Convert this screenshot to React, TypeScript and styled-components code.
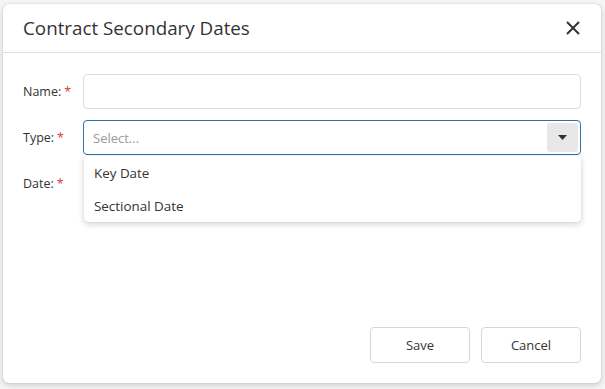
import React from "react";
import styled, { createGlobalStyle } from "styled-components";

const Global = createGlobalStyle`
  html, body { margin: 0; padding: 0; }
  body {
    background: #f6f6f6;
    font-family: "Open Sans", "Noto Sans", sans-serif;
    color: #333;
    width: 605px;
    height: 389px;
    overflow: hidden;
  }
`;

const Page = styled.div`
  padding: 4px 4px 0 3px;
`;

const Dialog = styled.div`
  width: 598px;
  height: 379px;
  background: #fff;
  border-radius: 6px;
  box-shadow: 0 2px 6px rgba(0, 0, 0, 0.18), 0 0 1px rgba(0, 0, 0, 0.25);
  display: flex;
  flex-direction: column;
  box-sizing: border-box;
`;

const Header = styled.div`
  height: 49px;
  box-sizing: border-box;
  border-bottom: 1px solid #dedede;
  display: flex;
  align-items: center;
  justify-content: space-between;
  padding: 0 20px 0 20px;
`;

const Title = styled.h1`
  margin: 0;
  font-size: 18.8px;
  font-weight: 400;
  color: #333;
`;

const Close = styled.button`
  border: 0;
  background: transparent;
  padding: 0;
  width: 16px;
  height: 16px;
  display: flex;
  align-items: center;
  justify-content: center;
  cursor: pointer;
`;

const Body = styled.div`
  flex: 1;
  padding: 21px 20px 0 20px;
  display: flex;
  flex-direction: column;
  gap: 11px;
`;

const Row = styled.div`
  display: flex;
  align-items: center;
  height: 35px;
  position: relative;
`;

const Label = styled.label`
  width: 60px;
  flex: none;
  font-size: 12.5px;
  color: #333;
`;

const Star = styled.span`
  color: #d9383a;
  margin-left: 3px;
`;

const Input = styled.input`
  flex: 1;
  height: 35px;
  box-sizing: border-box;
  border: 1px solid #dcdcdc;
  border-radius: 4px;
  outline: none;
  padding: 0 10px;
  font-family: inherit;
  font-size: 13px;
`;

const Select = styled.div`
  flex: 1;
  height: 35px;
  box-sizing: border-box;
  border: 1px solid #2f6fae;
  border-radius: 4px;
  display: flex;
  align-items: center;
  padding: 0 2px 0 9px;
`;

const Placeholder = styled.span`
  flex: 1;
  font-size: 13px;
  color: #999;
`;

const Caret = styled.div`
  width: 31px;
  height: 29px;
  background: #e8e8e8;
  border-radius: 3px;
  display: flex;
  align-items: center;
  justify-content: center;
`;

const Menu = styled.ul`
  position: absolute;
  left: 61px;
  right: 0;
  top: 36px;
  margin: 0;
  padding: 0;
  list-style: none;
  background: #fff;
  border-radius: 0 0 4px 4px;
  box-shadow: 0 2px 6px rgba(0, 0, 0, 0.18), 0 0 1px rgba(0, 0, 0, 0.2);
  z-index: 2;
  height: 66px;
  display: flex;
  flex-direction: column;
`;

const Item = styled.li`
  padding: 0 10px;
  font-size: 13.4px;
  color: #333;
  height: 33px;
  line-height: 34px;
`;

const Footer = styled.div`
  display: flex;
  justify-content: flex-end;
  gap: 11px;
  padding: 0 20px 20px 0;
`;

const Button = styled.button`
  width: 100px;
  height: 36px;
  box-sizing: border-box;
  background: #fff;
  border: 1px solid #d6d6d6;
  border-radius: 4px;
  font-family: inherit;
  font-size: 13px;
  color: #333;
`;

export default function App() {
  return (
    <>
      <Global />
      <Page>
        <Dialog>
          <Header>
            <Title>Contract Secondary Dates</Title>
            <Close aria-label="Close">
              <svg width="14" height="14" viewBox="0 0 14 14">
                <path d="M1 1L13 13M13 1L1 13" stroke="#333" strokeWidth="2" />
              </svg>
            </Close>
          </Header>
          <Body>
            <Row>
              <Label>
                Name:<Star>*</Star>
              </Label>
              <Input />
            </Row>
            <Row>
              <Label>
                Type:<Star>*</Star>
              </Label>
              <Select>
                <Placeholder>Select...</Placeholder>
                <Caret>
                  <svg width="9" height="5" viewBox="0 0 9 5">
                    <path d="M0 0H9L4.5 5Z" fill="#333" />
                  </svg>
                </Caret>
              </Select>
              <Menu>
                <Item>Key Date</Item>
                <Item>Sectional Date</Item>
              </Menu>
            </Row>
            <Row>
              <Label>
                Date:<Star>*</Star>
              </Label>
            </Row>
          </Body>
          <Footer>
            <Button>Save</Button>
            <Button>Cancel</Button>
          </Footer>
        </Dialog>
      </Page>
    </>
  );
}
